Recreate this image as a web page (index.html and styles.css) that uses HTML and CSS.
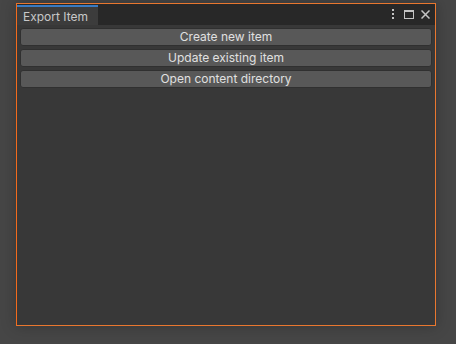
FILE: index.html
```html
<!DOCTYPE html>
<html lang="en">
<head>
  <meta charset="UTF-8" />
  <title>Export Item</title>
  <link rel="stylesheet" href="styles.css">
</head>
<body>
  <div class="window">
    <div class="tabbar">
      <div class="tab">Export Item</div>
      <div class="tools">
        <svg class="icon" width="4" height="10" viewBox="0 0 4 10">
          <rect x="1" y="0" width="2" height="2" fill="#c4c4c4"/>
          <rect x="1" y="4" width="2" height="2" fill="#c4c4c4"/>
          <rect x="1" y="8" width="2" height="2" fill="#c4c4c4"/>
        </svg>
        <svg class="icon" width="10" height="9" viewBox="0 0 10 9">
          <rect x="0.5" y="0.5" width="9" height="8" fill="none" stroke="#c4c4c4"/>
          <rect x="0" y="0" width="10" height="2" fill="#c4c4c4"/>
        </svg>
        <svg class="icon" width="9" height="9" viewBox="0 0 9 9">
          <path d="M0.5 0.5 L8.5 8.5 M8.5 0.5 L0.5 8.5" stroke="#c4c4c4" stroke-width="1.5"/>
        </svg>
      </div>
    </div>
    <div class="content">
      <button type="button">Create new item</button>
      <button type="button">Update existing item</button>
      <button type="button">Open content directory</button>
    </div>
  </div>
</body>
</html>
```

FILE: styles.css
```css
html, body {
  height: 100%;
}
body {
  margin: 0;
  padding: 3px 0 0 16px;
  box-sizing: border-box;
  background: #464646;
  font-family: Inter, 'Noto Sans', sans-serif;
}
.window {
  width: 420px;
  height: 323px;
  box-sizing: border-box;
  border: 1px solid #e9772f;
  border-left-color: #f26b1d;
  background: #383838;
  box-shadow: 0 0 14px rgba(0, 0, 0, 0.25);
  display: flex;
  flex-direction: column;
}
.tabbar {
  height: 21px;
  background: #282828;
  display: flex;
  align-items: flex-end;
}
.tab {
  width: 75px;
  height: 18px;
  margin-right: auto;
  padding-left: 6px;
  border-top: 2px solid #3a7ac0;
  background: #3c3c3c;
  color: #c8c8c8;
  font-size: 12px;
  line-height: 19px;
}
.tools {
  align-self: stretch;
  display: flex;
  align-items: flex-start;
  padding-top: 5px;
  padding-right: 5px;
}
.icon {
  display: block;
}
.tools .icon:nth-child(1) { margin-right: 9px; }
.tools .icon:nth-child(2) { margin-right: 7px; margin-top: 1px; }
.tools .icon:nth-child(3) { margin-top: 1px; }
.content {
  flex: 1;
  padding: 3px 3px 4px 3px;
  display: flex;
  flex-direction: column;
  gap: 3px;
}
button {
  height: 18px;
  padding: 0;
  background: #585858;
  border: 1px solid #303030;
  border-radius: 3px;
  color: #e0e0e0;
  font-family: Inter, 'Noto Sans', sans-serif;
  font-size: 12px;
  line-height: 16px;
}
```
